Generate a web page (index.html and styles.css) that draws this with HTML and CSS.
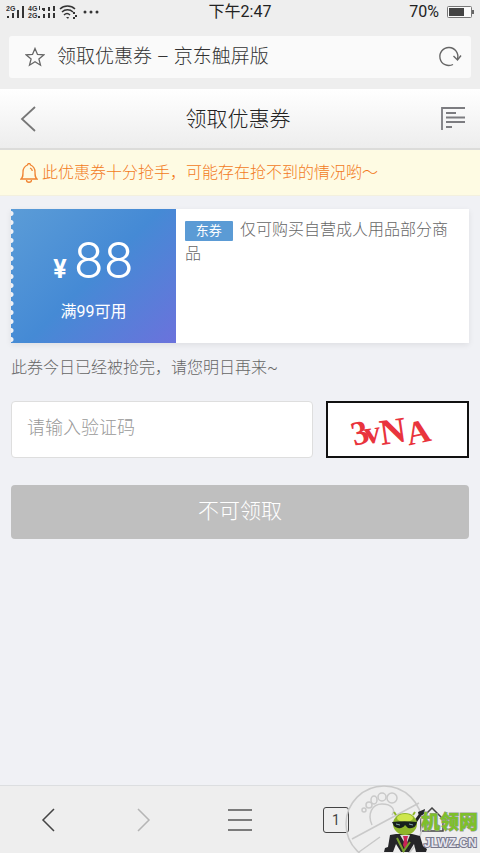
FILE: index.html
```html
<!DOCTYPE html>
<html lang="zh-CN">
<head>
    <meta charset="UTF-8">
    <meta name="viewport" content="width=device-width, initial-scale=1.0">
    <title>领取优惠券 – 京东触屏版</title>
    <link rel="stylesheet" href="styles.css">
</head>
<body>
    <div class="browser-top">
        <div class="status">
            <div class="signals">
                <svg width="96" height="16" viewBox="0 0 96 16" fill="#333" aria-hidden="true">
                    <text x="0" y="7" class="net">2G</text>
                    <path d="M1 12h2v2H1zM6 9h2v5H6zM11 6h2v8h-2zM16 2h2v12h-2z"/>
                    <text x="22" y="7" class="net">4G</text>
                    <text x="22" y="14" class="net">2G</text>
                    <path d="M33 2h1v4h-1zM36 4h1v2h-1zM32 12h2v2h-2zM37 4h2v3h-2zM37 10h2v4h-2zM42 3h2v4h-2zM42 9h2v5h-2zM47 2h2v5h-2zM47 9h2v5h-2z"/>
                    <g fill="none" stroke="#333" stroke-width="1.5">
                        <path d="M54 5c4-4 11-4 15 0M56 8c3-3 8-3 11 0M58 11c2-2 4-2 6 0"/>
                    </g>
                    <path d="M60 13h3l-1 2zM67 8h2v2h-2zM69 11h2v2h-2zM67 13h2v2h-2z"/>
                    <circle cx="79" cy="8" r="1.5"/><circle cx="85" cy="8" r="1.5"/><circle cx="91" cy="8" r="1.5"/>
                </svg>
            </div>
            <div>下午2:47</div>
            <div class="battery">
                <span>70%</span>
                <svg width="27" height="14" viewBox="0 0 27 14" aria-hidden="true">
                    <rect x="0.5" y="1.5" width="24" height="11" rx="1" fill="#fafafa" stroke="#777"/>
                    <rect x="2" y="3" width="15" height="8" fill="#444"/>
                    <path d="M25 5h2v4h-2z" fill="#666"/>
                </svg>
            </div>
        </div>
        <div class="address">
            <button class="icon-btn" aria-label="收藏">
                <svg width="20" height="20" viewBox="0 0 20 20" fill="none" stroke="#666" stroke-width="1.3">
                    <path d="M10 1.5l2.5 6 6.2.4-4.8 4 1.6 6.3L10 14.800l-5.500 3.400 1.600-6.300-4.800-4 6.200-.4z"/>
                </svg>
            </button>
            <span class="address-title">领取优惠券 – 京东触屏版</span>
            <button class="icon-btn" aria-label="刷新">
                <svg width="24" height="22" viewBox="0 0 24 22" fill="none" stroke="#666" stroke-width="1.4">
                    <path d="M15 18.500A9 9 0 1 1 19.500 13"/>
                    <path d="M15.500 10l4 4 3.500-4.500"/>
                </svg>
            </button>
        </div>
    </div>

    <header>
        <a class="back" href="#" aria-label="返回">
            <svg width="16" height="28" viewBox="0 0 16 28" fill="none" stroke="#777" stroke-width="1.8">
                <path d="M15 2L2 14l13 12"/>
            </svg>
        </a>
        <h1>领取优惠券</h1>
        <button class="icon-btn" aria-label="菜单">
            <svg width="26" height="26" viewBox="0 0 26 26" fill="none" stroke="#7c7c80" stroke-width="1.8">
                <path d="M25 2H2v22M6 7h10M6 11.500h19M6 16h19M6 21h6"/>
            </svg>
        </button>
    </header>

    <p class="notice">
        <svg width="18" height="20" viewBox="0 0 18 20" fill="none" stroke="#f08432" stroke-width="1.3" aria-hidden="true">
            <path d="M1 16h16c-2-2-2-3-2-7 0-4-2-6-4.500-7a1.500 1.500 0 0 0-3 0C5 3 3 5 3 9c0 4 0 5-2 7zM6.500 17c0 3 5 3 5 0M10 5c1.500.5 2.200 1.500 2.300 3"/>
        </svg>
        <span>此优惠券十分抢手，可能存在抢不到的情况哟～</span>
    </p>

    <main>
        <section class="coupon">
            <div class="coupon-price">
                <div class="amount"><span class="yen">¥</span>88</div>
                <div>满99可用</div>
            </div>
            <p class="coupon-info"><span class="tag">东券</span>仅可购买自营成人用品部分商品</p>
        </section>
        <p class="message">此券今日已经被抢完，请您明日再来~</p>
        <form>
            <div class="captcha-row">
                <input type="text" placeholder="请输入验证码" aria-label="请输入验证码">
                <svg class="captcha" viewBox="0 0 140 54" role="img" aria-label="验证码">
                    <g fill="#e9343d">
                        <text x="23" y="42" font-size="35" transform="rotate(-14 32 31)">3</text>
                        <text x="36" y="41" font-size="33" transform="rotate(-8 44 32)">v</text>
                        <text x="52" y="41" font-size="37" transform="rotate(-8 65 30)">N</text>
                        <text x="79" y="41" font-size="34" transform="rotate(-12 91 30)">A</text>
                    </g>
                </svg>
            </div>
            <button class="submit" type="button">不可领取</button>
        </form>
    </main>

    <nav>
        <button aria-label="后退">
            <svg width="14" height="24" viewBox="0 0 14 24" fill="none" stroke="#444" stroke-width="1.5"><path d="M13 1L2 12l11 11"/></svg>
        </button>
        <button aria-label="前进">
            <svg width="14" height="24" viewBox="0 0 14 24" fill="none" stroke="#b5b5b5" stroke-width="1.5"><path d="M1 1l11 11L1 23"/></svg>
        </button>
        <button aria-label="工具栏">
            <svg width="24" height="24" viewBox="0 0 24 24" fill="none" stroke="#555" stroke-width="1.6"><path d="M0 2h24M0 12h24M0 22h24"/></svg>
        </button>
        <button aria-label="标签页"><span class="tabs">1</span></button>
        <button aria-label="主页">
            <svg width="26" height="26" viewBox="0 0 26 26" fill="none" stroke="#444" stroke-width="1.5"><path d="M2 12L13 1l11 11v12H2z"/></svg>
        </button>
        <svg class="watermark" width="138" height="68" viewBox="0 0 138 68" aria-hidden="true">
            <g fill="none" stroke="#c9c9c9" stroke-width="1.5">
                <circle cx="42" cy="39" r="38"/>
                <path d="M10 54l67-36M17 67l21-15M30 40c-5-11 0-21 10-21s14 6 10 11"/>
                <circle cx="22" cy="25" r="2"/>
                <circle cx="27" cy="20" r="3"/>
                <ellipse cx="32" cy="15" rx="3" ry="4"/>
                <ellipse cx="40" cy="12" rx="4" ry="4"/>
                <ellipse cx="50" cy="13" rx="5" ry="5"/>
            </g>
            <path d="M48 50l6-1h16l8 2 3 10 4 3-1 3H74l-2-8-5 8h-8l-5-8-3 8H42l1-4 3-1z" fill="#252528"/>
            <path d="M71 37l6-8 2 2-6 9zM76 27l7-3-1 5-5 3z" fill="#252528"/>
            <path d="M58 50h10l-4 10z" fill="#ddd"/>
            <path d="M61 51h5l-1 4 1 5-3 4-2-4 1-5z" fill="#c92456"/>
            <path d="M55 53l7 14M68 57l-7 10" stroke="#79a22d" stroke-width="2"/>
            <ellipse cx="63" cy="39" rx="12" ry="11" fill="#8fb62a"/>
            <ellipse cx="63" cy="33" rx="8" ry="4" fill="#cee64c"/>
            <path d="M54 30l-2-3M71 30l2-3" stroke="#8fb62a" stroke-width="2"/>
            <path d="M50 37c8-1 17-1 25 0-1 5-4 7-9 6l-3-3c-2 4-8 4-11 1z" fill="#17201c"/>
            <path d="M54 39l4 1M67 39l4 1" stroke="#8aa" stroke-width="1"/>
            <text x="79" y="44" class="mark-cn">机领网</text>
            <text x="82" y="62" class="mark-url">JLWZ.CN</text>
        </svg>
    </nav>
</body>
</html>
```
FILE: styles.css
```css
* {
    box-sizing: border-box;
}

body {
    display: flex;
    flex-direction: column;
    min-height: 100vh;
    margin: 0;
    font-family: Roboto, "Noto Sans CJK SC", sans-serif;
    font-size: 16px;
    font-weight: 300;
    line-height: 24px;
    color: #666;
    background-color: #f0f1f5;
}

button, input {
    font: inherit;
}

svg {
    display: block;
}

h1, p {
    margin: 0;
}

button {
    padding: 0;
    border: none;
    background: none;
    cursor: pointer;
}

.browser-top {
    padding: 0 9px 11px;
    background-color: #eee;
}

.status {
    display: grid;
    grid-template-columns: 1fr auto 1fr;
    align-items: center;
    height: 24px;
    margin: 0 -3px 12px;
    font-weight: 400;
    color: #222;
}

.battery {
    display: flex;
    justify-content: flex-end;
    align-items: center;
    gap: 8px;
}

.net {
    font-family: "Liberation Sans", sans-serif;
    font-size: 7px;
    font-weight: bold;
}

.address {
    display: flex;
    align-items: center;
    gap: 12px;
    height: 42px;
    padding: 0 9px 0 16px;
    border-radius: 3px;
    background-color: #fafafa;
}

.address-title {
    flex: 1;
    font-size: 19px;
    color: #333;
}

header {
    display: flex;
    align-items: center;
    justify-content: space-between;
    height: 61px;
    padding: 0 14px 0 20px;
    border-bottom: 2px solid #dcdcda;
    background: linear-gradient(#fff, #ededed);
}

h1 {
    font-size: 21px;
    font-weight: 300;
    color: #222;
}

.notice {
    display: flex;
    align-items: center;
    gap: 4px;
    height: 46px;
    padding: 0 20px;
    border-bottom: 1px solid #f3f0df;
    color: #f27a1c;
    background-color: #fefbe3;
    white-space: nowrap;
}

main {
    flex: 1;
    padding: 13px 11px;
}

.coupon {
    display: flex;
    min-height: 134px;
    background-color: #fff;
    box-shadow: 0 2px 6px rgba(0, 0, 0, 0.08);
}

.coupon-price {
    flex: 0 0 36%;
    padding-top: 22px;
    text-align: center;
    font-weight: 400;
    color: #fff;
    background:
        radial-gradient(circle at 0 50%, #f0f1f5 2px, transparent 3px) left top / 9px 9px repeat-y,
        linear-gradient(135deg, #5b9cd7, #458ad5 50%, #6b72dc);
}

.amount {
    font-family: Inter, sans-serif;
    font-size: 49px;
    font-weight: 300;
    line-height: 60px;
}

.yen {
    margin-right: 7px;
    font-family: Roboto, sans-serif;
    font-size: 25px;
    font-weight: 700;
}

.coupon-info {
    flex: 1;
    padding: 9px;
}

.tag {
    display: inline-block;
    width: 48px;
    margin-right: 7px;
    border-radius: 1px;
    font-size: 13px;
    font-weight: 400;
    line-height: 20px;
    text-align: center;
    color: #fff;
    background-color: #5b9bd5;
}

.message {
    margin: 13px 0 21px;
}

.captcha-row {
    display: flex;
    gap: 13px;
    margin-bottom: 27px;
}

.captcha-row input {
    flex: 1;
    min-width: 0;
    height: 57px;
    padding: 0 15px 4px;
    border: 1px solid #dedede;
    border-radius: 4px;
    font-size: 18px;
    background-color: #fff;
}

.captcha-row input::placeholder {
    color: #999;
}

.captcha {
    width: 143px;
    height: 57px;
    border: 2px solid #111;
    font-family: "Liberation Serif", serif;
    font-weight: bold;
    background-color: #fff;
}

.submit {
    width: 100%;
    height: 54px;
    padding-bottom: 3px;
    border-radius: 4px;
    font-size: 21px;
    color: #fff;
    background-color: #bfbfbf;
}

nav {
    position: relative;
    display: grid;
    grid-template-columns: repeat(5, 1fr);
    height: 68px;
    border-top: 1px solid #dcdee0;
    background-color: #eee;
}

nav button {
    display: flex;
    align-items: center;
    justify-content: center;
}

.tabs {
    width: 26px;
    border: 1px solid #444;
    border-radius: 3px;
    font-size: 14px;
    font-weight: 400;
    color: #444;
}

/* site mark lies over the toolbar */
.watermark {
    position: absolute;
    right: 0;
    bottom: 0;
    pointer-events: none;
}

.mark-cn {
    font-family: "Noto Sans CJK SC", sans-serif;
    font-size: 19px;
    font-weight: 900;
    fill: #7dc02a;
    stroke: #999;
    stroke-width: 1px;
    paint-order: stroke;
}

.mark-url {
    font-family: "Liberation Sans", sans-serif;
    font-size: 12px;
    font-weight: bold;
    fill: #e6e6f0;
    stroke: #77778a;
    stroke-width: 2px;
    paint-order: stroke;
}
```
